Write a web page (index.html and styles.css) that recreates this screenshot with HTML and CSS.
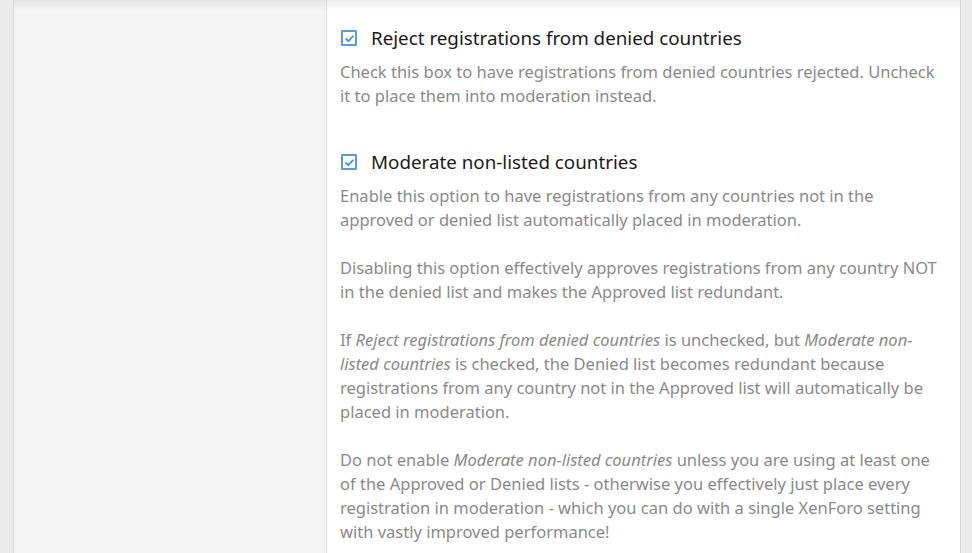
FILE: index.html
```html
<!DOCTYPE html>
<html lang="en">
<head>
  <meta charset="UTF-8">
  <title>Registration options</title>
  <link rel="stylesheet" href="styles.css">
</head>
<body>

  <div class="page">
    <div class="side"></div>

    <div class="options">

      <div class="option">
        <label class="option-title">
          <span class="check">
            <svg width="12" height="12" viewBox="0 0 12 12"><path d="M1.8 6 L4.8 9 L10.2 3" fill="none" stroke="#4a8fd6" stroke-width="2"/></svg>
          </span>
          Reject registrations from denied countries
        </label>
        <div class="hint">
          <p>Check this box to have registrations from denied countries rejected. Uncheck it to place them into moderation instead.</p>
        </div>
      </div>

      <div class="option">
        <label class="option-title">
          <span class="check">
            <svg width="12" height="12" viewBox="0 0 12 12"><path d="M1.8 6 L4.8 9 L10.2 3" fill="none" stroke="#4a8fd6" stroke-width="2"/></svg>
          </span>
          Moderate non-listed countries
        </label>
        <div class="hint">
          <p>Enable this option to have registrations from any countries not in the approved or denied list automatically placed in moderation.</p>
          <p>Disabling this option effectively approves registrations from any country NOT in the denied list and makes the Approved list redundant.</p>
          <p>If <i>Reject registrations from denied countries</i> is unchecked, but <i>Moderate non-listed countries</i> is checked, the Denied list becomes redundant because registrations from any country not in the Approved list will automatically be placed in moderation.</p>
          <p>Do not enable <i>Moderate non-listed countries</i> unless you are using at least one of the Approved or Denied lists - otherwise you effectively just place every registration in moderation - which you can do with a single XenForo setting with vastly improved performance!</p>
        </div>
      </div>

    </div>
  </div>

</body>
</html>
```

FILE: styles.css
```css
body {
  margin: 0;
  background-color: #ebebeb;
  font-family: "Noto Sans", sans-serif;
  overflow: hidden;
}

.page {
  display: flex;
  margin: 0 11px 0 13px;
  height: 553px;
  border-left: 1px solid #d8d8d8;
  border-right: 1px solid #d4d4d4;
  position: relative;
}

/* 上の影 */
.page::before {
  content: "";
  position: absolute;
  top: 0;
  left: 0;
  right: 0;
  height: 10px;
  background: linear-gradient(rgba(0, 0, 0, 0.07), rgba(0, 0, 0, 0));
}

.side {
  width: 312px;
  background-color: #f5f5f5;
  border-right: 1px solid #e2e2e2;
}

.options {
  flex: 1;
  background-color: #fff;
  padding: 26px 14px 0 13px;
}

.option {
  margin-bottom: 42px;
}

.option-title {
  display: flex;
  align-items: center;
  gap: 14px;
  font-size: 18.8px;
  color: #1a1a1a;
  height: 24px;
  margin-bottom: 10px;
}

.check {
  width: 12px;
  height: 12px;
  border: 2px solid #5b9ad8;
  border-radius: 1px;
  display: flex;
  align-items: center;
  justify-content: center;
  margin-left: 1px;
}

.check svg {
  width: 11px;
  height: 11px;
}

.hint {
  font-size: 16.5px;
  line-height: 24px;
  color: #8a8a8a;
}

.hint p {
  margin: 0 0 24px;
}
```
